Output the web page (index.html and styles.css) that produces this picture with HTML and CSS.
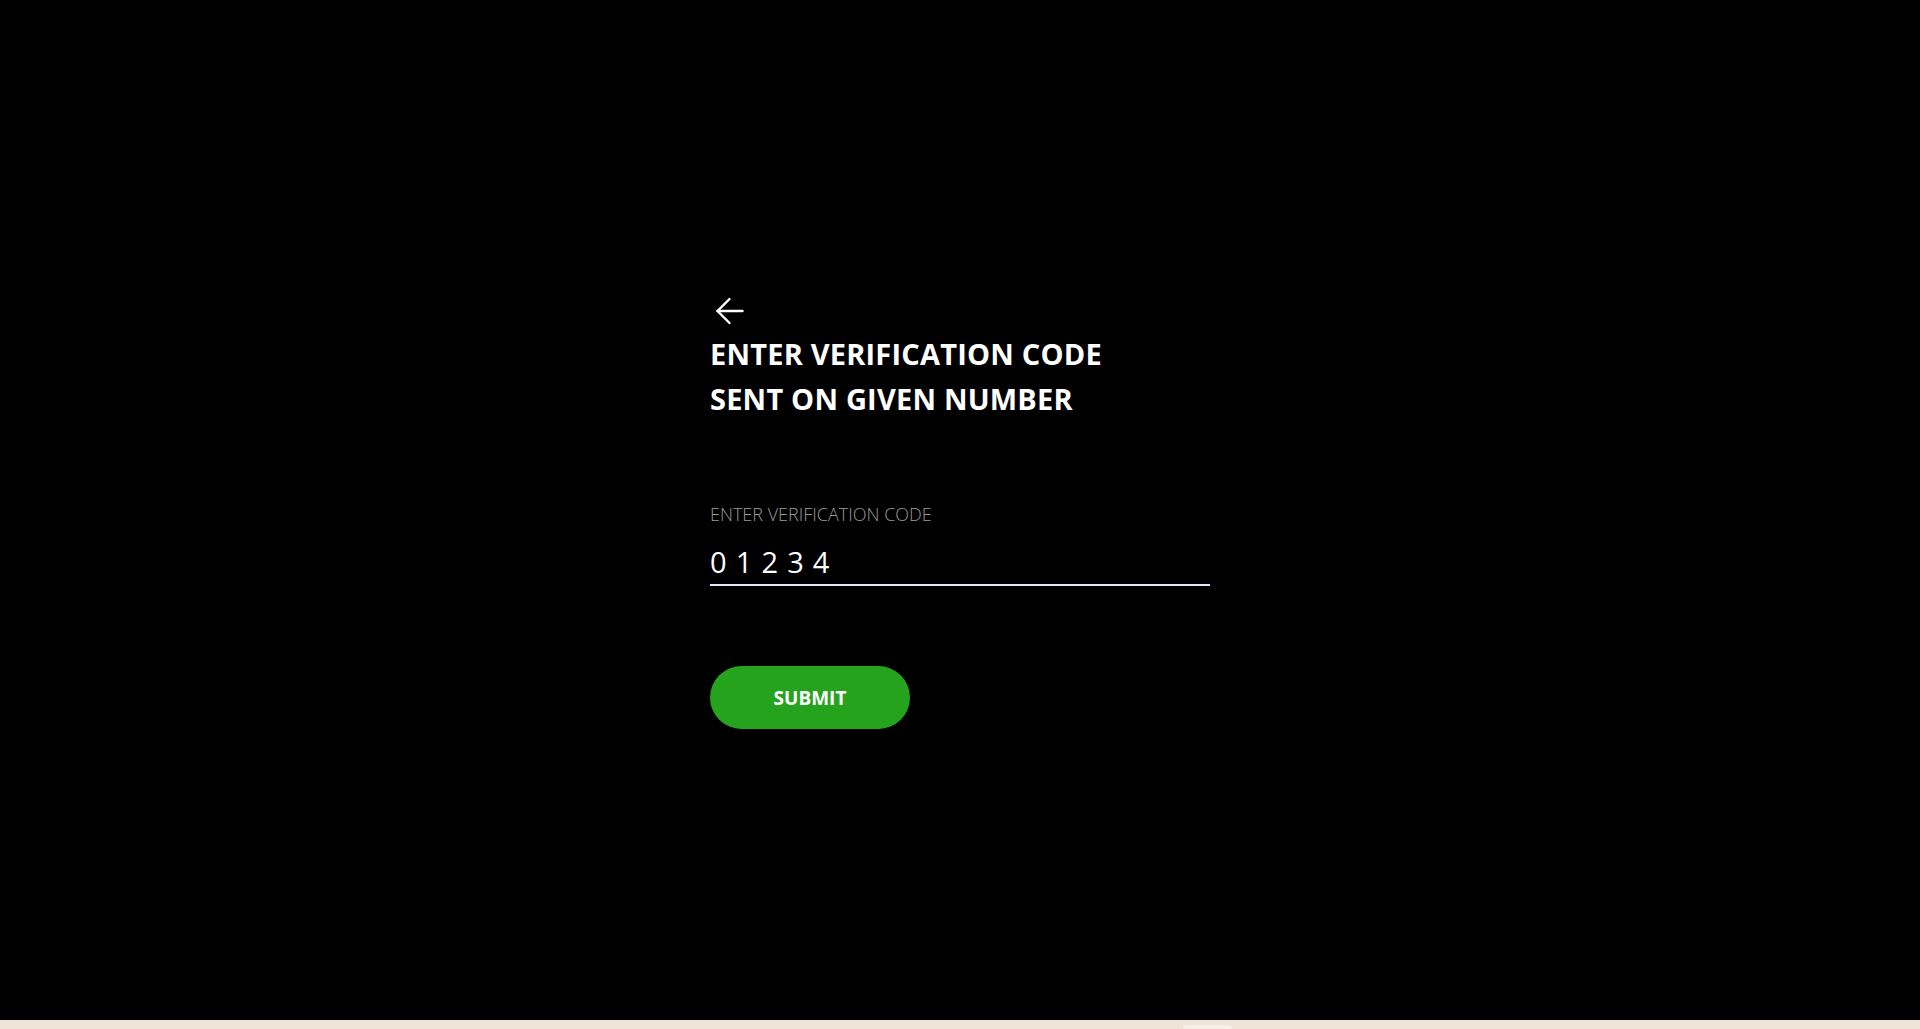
FILE: index.html
```html
<!DOCTYPE html>
<html lang="en">
<head>
<meta charset="utf-8">
<title>Verification</title>
<link rel="stylesheet" href="styles.css">
</head>
<body>
<div class="page">
  <main class="main">
    <section class="card">
      <button class="back" type="button" aria-label="Back">
        <svg width="30" height="30" viewBox="0 0 30 30" fill="none" stroke="#ffffff" stroke-width="2.4" stroke-linecap="round" stroke-linejoin="round">
          <path d="M2.5 15H27.5"/>
          <path d="M14.5 3L2.5 15L14.5 27"/>
        </svg>
      </button>
      <h1 class="title">ENTER VERIFICATION CODE<br>SENT ON GIVEN NUMBER</h1>
      <label class="label">ENTER VERIFICATION CODE</label>
      <div class="field">0 1 2 3 4</div>
      <button class="submit" type="button">SUBMIT</button>
    </section>
  </main>
  <footer class="strip"><span class="tab"></span></footer>
</div>
</body>
</html>
```
FILE: styles.css
```css
html, body {
  margin: 0;
  padding: 0;
  height: 100%;
  overflow: hidden;
  background: #000;
}
body {
  font-family: "Open Sans", "Noto Sans", sans-serif;
  color: #fff;
}
.page {
  display: flex;
  flex-direction: column;
  height: 100vh;
}
.main {
  flex: 1;
  display: flex;
  justify-content: center;
  background: #000;
}
.card {
  width: 500px;
  padding-top: 296px;
  display: flex;
  flex-direction: column;
  align-items: flex-start;
}
.back {
  background: none;
  border: 0;
  padding: 0;
  margin: 0 0 0 5px;
  width: 30px;
  height: 30px;
  display: block;
  cursor: pointer;
}
.back svg { display: block; }
.title {
  margin: 5px 0 0;
  font-size: 29px;
  line-height: 45px;
  font-weight: 700;
  letter-spacing: 0.2px;
  color: #fff;
}
.label {
  margin-top: 83px;
  font-size: 18px;
  line-height: 20px;
  font-weight: 300;
  color: #999;
}
.field {
  margin-top: 20px;
  align-self: stretch;
  font-size: 29px;
  line-height: 36px;
  letter-spacing: 0.8px;
  padding-bottom: 4px;
  border-bottom: 2px solid #e8e6f6;
  color: #fff;
}
.submit {
  margin-top: 80px;
  width: 200px;
  height: 63px;
  border: 0;
  border-radius: 32px;
  background: #26a31d;
  color: #fff;
  font-family: "Open Sans", "Noto Sans", sans-serif;
  font-size: 19px;
  font-weight: 700;
  cursor: pointer;
}
.strip {
  height: 9px;
  background: #f0e3d8;
  position: relative;
}
.tab {
  position: absolute;
  left: 1183px;
  top: 5px;
  width: 49px;
  height: 4px;
  background: #f8efe7;
  border-radius: 4px 4px 0 0;
}
```
